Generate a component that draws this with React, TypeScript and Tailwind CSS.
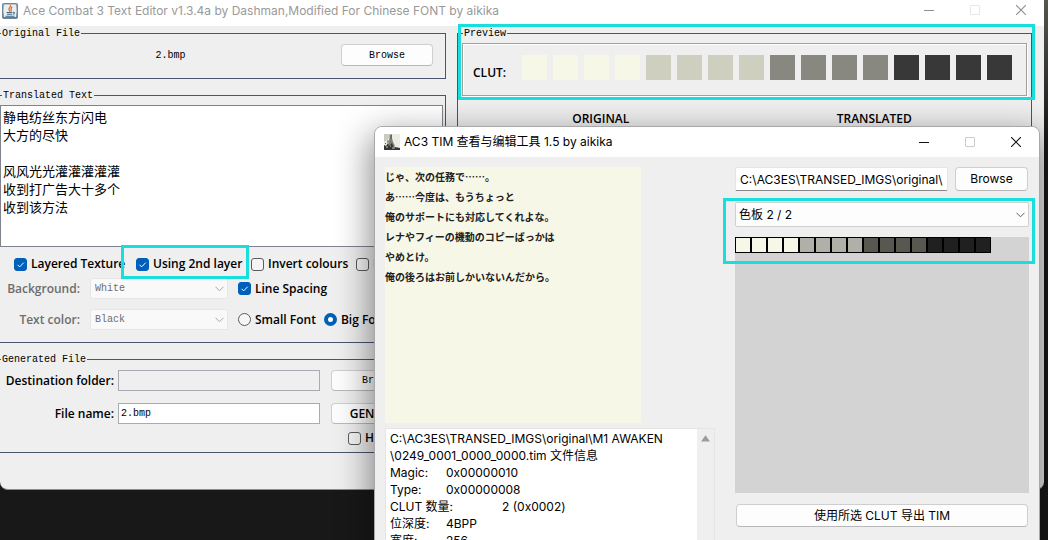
import type { ReactNode } from "react";

const MONO = "font-['Liberation_Mono','Noto_Sans_CJK_SC',monospace]";
const UI = "font-['Inter','Noto_Sans_CJK_SC',sans-serif]";

const previewClut = [
  ...Array(4).fill("bg-[#f7f7e8]"),
  ...Array(4).fill("bg-[#cfcfc0]"),
  ...Array(4).fill("bg-[#888880]"),
  ...Array(4).fill("bg-[#383838]"),
];

const timClut = [
  ...Array(4).fill("bg-[#f7f7e8]"),
  ...Array(4).fill("bg-[#b0b0a8]"),
  ...Array(4).fill("bg-[#585850]"),
  ...Array(4).fill("bg-[#202020]"),
];

function JavaIcon() {
  return (
    <svg width="16" height="16" viewBox="0 0 16 16" aria-hidden="true">
      <defs>
        <linearGradient id="jv" x1="0" y1="0" x2="0" y2="1">
          <stop offset="0" stopColor="#7d95a8" />
          <stop offset="0.5" stopColor="#c3d0d9" />
          <stop offset="1" stopColor="#4f6d87" />
        </linearGradient>
      </defs>
      <rect x="0.5" y="0.5" width="15" height="15" rx="1" fill="url(#jv)" stroke="#6f8799" />
      <rect x="2" y="1.5" width="12" height="12.5" fill="#e9eef1" />
      <path d="M8.2 2C9.8 4 5.8 5 7.2 7.2C7.8 8 8 8.2 7.4 8.6M10.3 3.8C7.4 5.4 10.4 6.4 8.8 8.4" fill="none" stroke="#e8762a" strokeWidth="1.4" />
      <path d="M4.5 9.5H10.5M5 11.2H10M3.5 13.2H12.5M11 9.3C13 8.8 12.8 11 10.8 11.2" fill="none" stroke="#3f6a8c" strokeWidth="1.1" />
    </svg>
  );
}

function PhotoIcon() {
  return (
    <svg width="16" height="16" viewBox="0 0 16 16" aria-hidden="true">
      <rect width="16" height="16" fill="#ecece2" />
      <path d="M0 0H7L5 4L3 6L0 8Z" fill="#c9cac0" />
      <path d="M6 1L8 0L8 4L9 8L11 12H4L5 7Z" fill="#7e807a" />
      <path d="M0 11L2 12L4 9L5 12L8 9L9 12L11 13L16 14V16H0Z" fill="#343632" />
      <path d="M7 1V5M1 9L2 10M4 6V9" stroke="#555751" strokeWidth="1" />
      <path d="M2 13H4M6 12H7M8 14H11" stroke="#c9cac2" strokeWidth="1" />
    </svg>
  );
}

function WindowButtons({ muted }: { muted?: boolean }) {
  const ink = muted ? "#8f8f8f" : "#111111";
  const off = muted ? "#e6e6e6" : "#cccccc";
  return (
    <div className="flex h-full shrink-0">
      <button aria-label="Minimize" className="flex w-[46px] items-center justify-center">
        <svg width="10" height="10" viewBox="0 0 10 10"><path d="M0 5.5H10" stroke={ink} /></svg>
      </button>
      <button aria-label="Maximize" disabled className="flex w-[46px] items-center justify-center">
        <svg width="10" height="10" viewBox="0 0 10 10"><rect x="0.5" y="0.5" width="9" height="9" rx="0.5" fill="none" stroke={off} /></svg>
      </button>
      <button aria-label="Close" className="flex w-[46px] items-center justify-center">
        <svg width="10" height="10" viewBox="0 0 10 10"><path d="M0 0L10 10M10 0L0 10" stroke={ink} strokeWidth="1.1" /></svg>
      </button>
    </div>
  );
}

function Group({ title, indent, className, children }: { title: string; indent: string; className?: string; children: ReactNode }) {
  return (
    <fieldset className={`relative min-w-0 border border-[#49546e] ${className ?? ""}`}>
      <legend className={`${indent} ${MONO} px-px pt-0.5 text-[10px] font-normal leading-[12px]`}>{title}</legend>
      {children}
    </fieldset>
  );
}

function Check({ label, checked }: { label: string; checked?: boolean }) {
  return (
    <label className="flex items-center gap-1 whitespace-nowrap">
      <span className="grid shrink-0">
        <input
          type="checkbox"
          defaultChecked={checked}
          className="peer col-start-1 row-start-1 size-[13px] appearance-none rounded-[3px] border border-[#5c5c5c] bg-[#f5f5f5] checked:border-[#005fb8] checked:bg-[#005fb8]"
        />
        <svg viewBox="0 0 13 13" className="pointer-events-none invisible col-start-1 row-start-1 size-[13px] peer-checked:visible">
          <path d="M3.5 6.8L5.6 8.9L9.7 4.7" fill="none" stroke="#fff" strokeWidth="1" />
        </svg>
      </span>
      {label}
    </label>
  );
}

function Radio({ label, checked }: { label: string; checked?: boolean }) {
  return (
    <label className="flex items-center gap-1 whitespace-nowrap">
      <input
        type="radio"
        name="font-size"
        defaultChecked={checked}
        className="size-[13px] shrink-0 appearance-none rounded-full border border-[#5c5c5c] bg-[#f5f5f5] checked:border-4 checked:border-[#005fb8] checked:bg-white"
      />
      {label}
    </label>
  );
}

function Chevron({ className }: { className: string }) {
  return (
    <svg viewBox="0 0 9 6" width="9" height="6" className={`pointer-events-none col-start-1 row-start-1 self-center justify-self-end ${className}`}>
      <path d="M0.5 0.8L4.5 4.8L8.5 0.8" fill="none" stroke="currentColor" />
    </svg>
  );
}

function DisabledSelect({ id, value }: { id: string; value: string }) {
  return (
    <div className="grid w-[138px] shrink-0">
      <select
        id={id}
        disabled
        className={`col-start-1 row-start-1 h-[21px] w-full appearance-none rounded-[2px] border border-[#e6e6e6] bg-[#f9f9f9] px-1 text-[10px] font-normal text-[#6d6d6d] opacity-100 ${MONO}`}
      >
        <option>{value}</option>
      </select>
      <Chevron className="mr-1 text-[#a5a5a5]" />
    </div>
  );
}

const pushButton = "shrink-0 rounded-[4px] border border-[#cfcfcf] border-b-[#b9b9b9] bg-[#fdfdfd] text-center";

function EditorWindow() {
  return (
    <main className="mr-1 overflow-hidden rounded-b-lg border-b border-[#8b8b8b] bg-[#efefef] font-['Open_Sans','Noto_Sans_CJK_SC',sans-serif] text-[12px] font-semibold text-black">
      <header className="flex h-[26px] items-center justify-between bg-white">
        <div className="-mt-1 flex items-center gap-[5px] pl-0.5">
          <JavaIcon />
          <h1 className={`whitespace-nowrap text-[12px] font-normal leading-4 text-[#999999] ${UI}`}>
            Ace Combat 3 Text Editor v1.3.4a by Dashman,Modified For Chinese FONT by aikika
          </h1>
        </div>
        <div className="-mt-1.5 h-5"><WindowButtons muted /></div>
      </header>

      <div className="flex gap-[11px] pb-9 pr-3">
        <div className="flex w-[446px] shrink-0 flex-col gap-[9px]">
          <Group title="Original File" indent="ml-px" className="border-l-0 pb-3">
            <div className={`mt-1 flex items-center pr-3 text-[10px] font-normal ${MONO}`}>
              <span className="flex-1 text-center">2.bmp</span>
              <button className={`${pushButton} h-[22px] w-[92px]`}>Browse</button>
            </div>
          </Group>

          <Group title="Translated Text" indent="ml-0.5" className="border-l-0 pb-3">
            <textarea
              aria-label="Translated Text"
              spellCheck={false}
              className="mt-[3px] block h-[142px] w-[443px] resize-none border border-[#7f838c] bg-white px-0.5 py-0.5 font-['Noto_Sans_CJK_SC',sans-serif] text-[13px] font-normal leading-[18px] outline-none"
              defaultValue={"静电纺丝东方闪电\n大方的尽快\n\n风风光光灌灌灌灌灌\n收到打广告大十多个\n收到该方法"}
            />
            <div className="mt-[5px] grid h-6 grid-cols-[122px_115px_105px_1fr] items-center pl-3.5">
              <Check label="Layered Texture" checked />
              <div className="relative">
                <Check label="Using 2nd layer" checked />
                <div className="pointer-events-none absolute -bottom-1.5 -left-[15px] -top-2.5 right-0.5 border-[3px] border-[#18dedd]" />
              </div>
              <Check label="Invert colours" />
              <Check label="I" />
            </div>
            <div className="grid grid-cols-[80px_138px_1fr] items-center gap-x-2.5 gap-y-2.5 pt-0.5">
              <label htmlFor="background" className="text-right text-[#6d6d6d]">Background:</label>
              <DisabledSelect id="background" value="White" />
              <Check label="Line Spacing" checked />
              <label htmlFor="text-color" className="text-right text-[#6d6d6d]">Text color:</label>
              <DisabledSelect id="text-color" value="Black" />
              <div className="flex gap-2">
                <Radio label="Small Font" />
                <Radio label="Big Font" checked />
              </div>
            </div>
          </Group>

          <Group title="Generated File" indent="ml-px" className="border-l-0 pb-1">
            <div className="mt-1 grid grid-cols-[114px_206px_109px] items-center gap-y-3">
              <label htmlFor="folder" className="text-right">Destination folder:</label>
              <input id="folder" readOnly className="ml-1 h-[21px] border border-[#a9abb3] bg-[#efefef] px-0.5" />
              <button className={`${pushButton} ml-[11px] h-[21px] text-[10px] font-normal ${MONO}`}>Browse</button>
              <label htmlFor="file-name" className="text-right">File name:</label>
              <input id="file-name" defaultValue="2.bmp" className={`ml-1 h-[21px] border border-[#a9abb3] bg-white px-0.5 text-[10px] font-normal ${MONO}`} />
              <button className={`${pushButton} ml-[11px] h-[21px]`}>GENERATE</button>
            </div>
            <div className="mt-1 flex h-5 items-center pl-[348px]">
              <Check label="Ha" />
            </div>
          </Group>
        </div>

        <Group title="Preview" indent="ml-[5px]" className="flex-1">
          <div className="mx-1 mt-[3px] flex h-[53px] items-center border border-[#a0a0a0] px-2.5 shadow-[inset_1px_1px_0_#fff,1px_1px_0_#fff]">
            <span className="mt-1.5 w-[49px]">CLUT:</span>
            <div className="flex gap-1.5">
              {previewClut.map((c, i) => (
                <span key={i} className={`-mt-1 size-[25px] ${c}`} />
              ))}
            </div>
          </div>
          <div className="grid grid-cols-2 pl-1.5 pr-5 pt-3.5 text-center leading-[18px]">
            <span>ORIGINAL</span>
            <span>TRANSLATED</span>
          </div>
          <div className="pointer-events-none absolute -right-1 -top-4 left-0 h-[76px] border-[3px] border-[#18dedd]" />
        </Group>
      </div>
    </main>
  );
}

const info = "C:\\AC3ES\\TRANSED_IMGS\\original\\M1 AWAKEN\n\\0249_0001_0000_0000.tim 文件信息\nMagic:\t0x00000010\nType:\t0x00000008\nCLUT 数量:\t2 (0x0002)\n位深度:\t4BPP\n宽度:\t256";

function TimWindow() {
  return (
    <section className={`absolute left-[374px] right-2 top-[126px] overflow-hidden rounded-lg border border-[#a8a8a8] bg-[#efefef] text-[12px] text-black shadow-[0_12px_34px_4px_rgba(0,0,0,0.45)] ${UI}`}>
      <header className="flex h-[30px] items-center justify-between bg-white">
        <div className="flex items-center gap-1 pl-[9px]">
          <PhotoIcon />
          <h2 className="whitespace-nowrap">AC3 TIM 查看与编辑工具 1.5 by aikika</h2>
        </div>
        <WindowButtons />
      </header>

      <div className="flex gap-5 px-2.5 pt-2.5">
        <div className="w-[330px] shrink-0">
          <div
            lang="ja"
            className="size-64 whitespace-pre-line bg-[#f7f7e8] font-['Noto_Sans_CJK_JP',sans-serif] text-[10px] font-bold leading-5 text-[#202020]"
          >
            {"じゃ、次の任務で……。\nあ……今度は、もうちょっと\n俺のサポートにも対応してくれよな。\nレナやフィーの機動のコピーばっかは\nやめとけ。\n俺の後ろはお前しかいないんだから。"}
          </div>
          <div className="mt-[5px] flex h-[180px] border border-[#e5e5e5] bg-white">
            <textarea
              aria-label="文件信息"
              readOnly
              spellCheck={false}
              className="flex-1 resize-none overflow-hidden whitespace-pre pl-1 pt-px leading-[17px] outline-none [tab-size:56px]"
              defaultValue={info}
            />
            <div className="flex w-[17px] justify-center bg-[#efefef] pt-1.5">
              <svg width="9" height="7" viewBox="0 0 9 7" aria-hidden="true"><path d="M4.5 0.3L9 6.5H0Z" fill="#9c9c9c" /></svg>
            </div>
          </div>
        </div>

        <div className="min-w-0 flex-1">
          <div className="flex gap-[7px] pr-px">
            <input
              aria-label="路径"
              defaultValue={"C:\\AC3ES\\TRANSED_IMGS\\original\\"}
              className="h-6 min-w-0 flex-1 rounded-[2px] border border-[#e5e5e5] border-b-[#868686] bg-white pl-1 outline-none"
            />
            <button className={`${pushButton} h-6 w-[73px]`}>Browse</button>
          </div>
          <div className="mt-[11px] grid">
            <select aria-label="色板" className="col-start-1 row-start-1 h-[25px] w-full appearance-none rounded-[2px] border border-[#d0d0d0] bg-[#fdfdfd] px-[3px]">
              <option>色板 2 / 2</option>
            </select>
            <Chevron className="mr-1 text-[#606060]" />
          </div>
          <div className="mt-2.5 h-64 bg-[#d3d3d3]">
            <div className="flex">
              {timClut.map((c, i) => (
                <span key={i} className={`size-4 border border-black ${c}`} />
              ))}
            </div>
          </div>
          <div className="mt-[11px] px-px">
            <button className={`${pushButton} h-[23px] w-full`}>使用所选 CLUT 导出 TIM</button>
          </div>
        </div>
      </div>
    </section>
  );
}

export default function App() {
  return (
    <div className="relative h-screen overflow-hidden bg-[#171817] bg-[linear-gradient(#55574f,#171817_140px)]">
      <EditorWindow />
      <TimWindow />
      <div className="pointer-events-none absolute right-[13px] top-[198px] h-[66px] w-[312px] border-[3px] border-[#18dedd]" />
    </div>
  );
}
